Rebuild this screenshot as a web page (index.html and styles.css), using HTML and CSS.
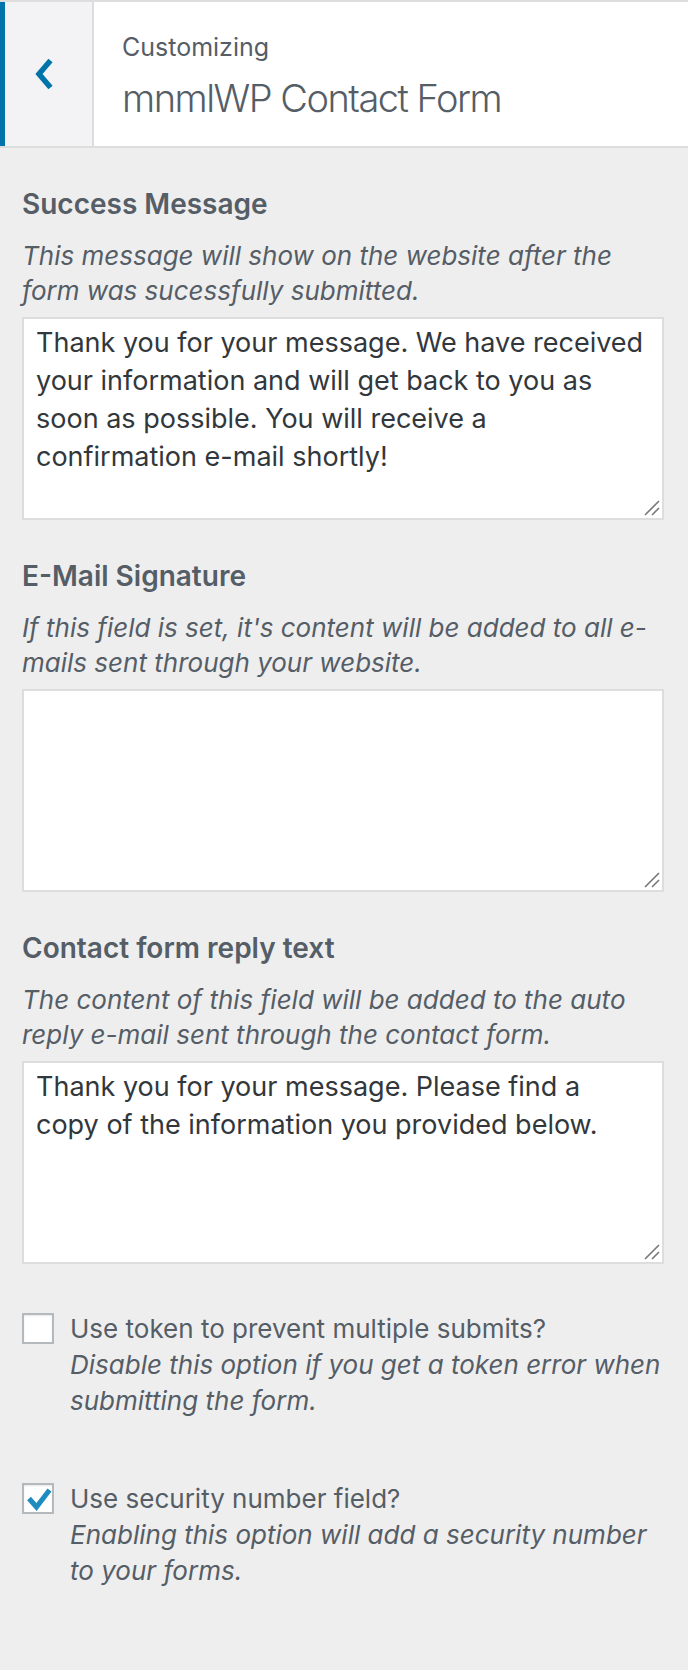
FILE: index.html
```html
<!DOCTYPE html>
<html>
<head>
<meta charset="utf-8">
<link rel="stylesheet" href="styles.css">
</head>
<body>
<div class="panel">
  <header class="header">
    <div class="back">
      <svg class="chev" width="22" height="32" viewBox="0 0 22 32"><polyline points="17.5,2.5 6,16 17.5,29.5" fill="none" stroke="#0073aa" stroke-width="5.5"/></svg>
    </div>
    <div class="titles">
      <div class="customizing">Customizing</div>
      <div class="title">mnmlWP Contact Form</div>
    </div>
  </header>

  <main class="content">
    <section class="control">
      <div class="label">Success Message</div>
      <div class="desc">This message will show on the website after the form was sucessfully submitted.</div>
      <div class="ta-wrap">
        <textarea class="ta">Thank you for your message. We have received your information and will get back to you as soon as possible. You will receive a confirmation e-mail shortly!</textarea>
        <svg class="grip" width="16" height="16" viewBox="0 0 16 16"><line x1="1" y1="15" x2="15" y2="1" stroke="#767676" stroke-width="1.6"/><line x1="8" y1="15" x2="15" y2="8" stroke="#767676" stroke-width="1.6"/></svg>
      </div>
    </section>

    <section class="control">
      <div class="label">E-Mail Signature</div>
      <div class="desc">If this field is set, it's content will be added to all e-mails sent through your website.</div>
      <div class="ta-wrap">
        <textarea class="ta"></textarea>
        <svg class="grip" width="16" height="16" viewBox="0 0 16 16"><line x1="1" y1="15" x2="15" y2="1" stroke="#767676" stroke-width="1.6"/><line x1="8" y1="15" x2="15" y2="8" stroke="#767676" stroke-width="1.6"/></svg>
      </div>
    </section>

    <section class="control">
      <div class="label">Contact form reply text</div>
      <div class="desc">The content of this field will be added to the auto reply e-mail sent through the contact form.</div>
      <div class="ta-wrap">
        <textarea class="ta">Thank you for your message. Please find a copy of the information you provided below.</textarea>
        <svg class="grip" width="16" height="16" viewBox="0 0 16 16"><line x1="1" y1="15" x2="15" y2="1" stroke="#767676" stroke-width="1.6"/><line x1="8" y1="15" x2="15" y2="8" stroke="#767676" stroke-width="1.6"/></svg>
      </div>
    </section>

    <section class="check-control first">
      <span class="box"></span>
      <div class="check-text">
        <div class="check-label">Use token to prevent multiple submits?</div>
        <div class="check-desc">Disable this option if you get a token error when submitting the form.</div>
      </div>
    </section>

    <section class="check-control">
      <span class="box">
        <svg width="27" height="27" viewBox="0 0 27 27"><polyline points="4,13.5 11.5,22 24.5,5" fill="none" stroke="#1e8cbe" stroke-width="5" stroke-linejoin="miter"/></svg>
      </span>
      <div class="check-text">
        <div class="check-label">Use security number field?</div>
        <div class="check-desc">Enabling this option will add a security number to your forms.</div>
      </div>
    </section>
  </main>
</div>
</body>
</html>
```

FILE: styles.css
```css
html, body {
  margin: 0;
  padding: 0;
}
body {
  background: #eeeeee;
  font-family: Inter, "Noto Sans", Roboto, sans-serif;
  color: #555d66;
  width: 688px;
  height: 1670px;
  overflow: hidden;
}
.panel {
  border-top: 2px solid #dddddd;
}
.header {
  display: flex;
  height: 144px;
  background: #ffffff;
  border-bottom: 2px solid #dddddd;
}
.back {
  width: 87px;
  border-left: 5px solid #0073aa;
  border-right: 2px solid #dddddd;
  background: #f3f3f5;
  display: flex;
  align-items: center;
  justify-content: center;
}
.chev {
  margin-top: 0px;
  margin-left: -9px;
}
.titles {
  padding-left: 28px;
  padding-top: 29px;
}
.customizing {
  font-size: 25px;
  line-height: 32px;
  color: #555d66;
}
.title {
  font-size: 38px;
  font-weight: 300;
  line-height: 50px;
  margin-top: 10px;
  color: #555d66;
  letter-spacing: -1.5px;
}
.content {
  padding: 36px 24px 0 22px;
}
.control {
  margin-bottom: 36px;
}
.label {
  font-size: 28px;
  font-weight: 600;
  line-height: 40px;
  color: #555d66;
}
.desc {
  font-size: 26px;
  font-style: italic;
  line-height: 35px;
  margin-top: 14px;
  margin-bottom: 9px;
  color: #555d66;
}
.ta-wrap {
  position: relative;
  height: 203px;
}
.ta {
  box-sizing: border-box;
  width: 100%;
  height: 203px;
  margin: 0;
  display: block;
  border: 2px solid #dddddd;
  background: #ffffff;
  resize: none;
  padding: 5px 12px;
  font-family: Inter, "Noto Sans", Roboto, sans-serif;
  font-size: 27px;
  line-height: 38px;
  color: #32373c;
  outline: none;
  overflow: hidden;
}
.grip {
  position: absolute;
  right: 4px;
  bottom: 4px;
}
.check-control {
  display: flex;
  align-items: flex-start;
  margin-bottom: 64px;
}
.check-control.first {
  margin-top: 49px;
}
.box {
  box-sizing: border-box;
  flex: none;
  width: 32px;
  height: 31px;
  border: 2px solid #b4b9be;
  background: #ffffff;
  box-shadow: inset 0 1px 2px rgba(0,0,0,0.1);
  margin-top: 0px;
  display: flex;
  align-items: center;
  justify-content: center;
}
.check-text {
  margin-left: 16px;
}
.check-label {
  font-size: 26px;
  line-height: 32px;
  color: #555d66;
}
.check-desc {
  font-size: 26px;
  font-style: italic;
  line-height: 36px;
  margin-top: 2px;
  color: #555d66;
}
```
